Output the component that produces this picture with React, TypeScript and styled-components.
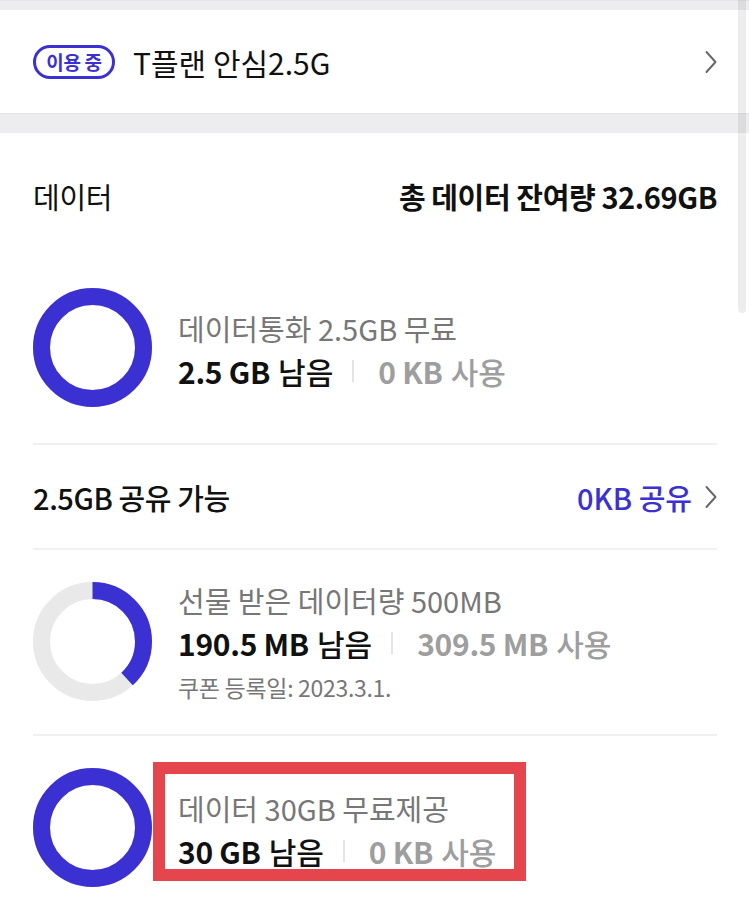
import React from 'react';
import styled, { createGlobalStyle } from 'styled-components';

const PURPLE = '#3b31d3';

const GlobalStyle = createGlobalStyle`
  html, body {
    margin: 0;
    padding: 0;
    background: #ffffff;
  }
  body {
    font-family: "Noto Sans CJK KR", "Noto Sans", sans-serif;
    color: #111111;
    overflow: hidden;
  }
`;

const Page = styled.div`
  position: relative;
  width: 749px;
  height: 911px;
  overflow: hidden;
  background: #ffffff;
`;

const GrayBand = styled.div<{ $height: number }>`
  box-sizing: border-box;
  height: ${({ $height }) => $height}px;
  background: #ededf0;
  border-top: 1px solid #e4e4e7;
`;

const PlanCard = styled.div`
  display: flex;
  align-items: center;
  height: 103px;
  padding: 0 32px 0 33px;
  background: #ffffff;
`;

const Badge = styled.span`
  display: inline-flex;
  align-items: center;
  justify-content: center;
  box-sizing: border-box;
  width: 82px;
  height: 34px;
  border: 3px solid ${PURPLE};
  border-radius: 17px;
  color: ${PURPLE};
  font-size: 19px;
  font-weight: 700;
  letter-spacing: -0.3px;
  padding-bottom: 1px;
`;

const PlanName = styled.span`
  flex: 1;
  margin-left: 18px;
  font-size: 30px;
  font-weight: 400;
`;

const Chevron = ({ color = '#666666' }: { color?: string }) => (
  <svg width="12" height="24" viewBox="0 0 12 24" fill="none">
    <path d="M1.5 2 L10.5 12 L1.5 22" stroke={color} strokeWidth="1.9" strokeLinecap="round" strokeLinejoin="round" />
  </svg>
);

const Section = styled.section`
  padding: 0 32px 0 33px;
`;

const SectionHeader = styled.div`
  display: flex;
  align-items: center;
  justify-content: space-between;
  height: 40px;
  padding: 43px 0 39px;
`;

const HeaderTitle = styled.span`
  font-size: 29px;
  font-weight: 400;
  letter-spacing: -0.3px;
`;

const HeaderTotal = styled.span`
  font-size: 29px;
  font-weight: 700;
  letter-spacing: -0.4px;
`;

const RingRow = styled.div<{ $divider?: boolean }>`
  display: flex;
  align-items: center;
  gap: 26px;
  height: 119px;
  padding: ${({ $divider }) => ($divider ? '32px 0 33px' : '33px 0 36px')};
  border-top: ${({ $divider }) => ($divider ? '2px solid #f0f0f0' : 'none')};
`;

const RingText = styled.div`
  display: flex;
  flex-direction: column;
  padding-top: 4px;
  white-space: nowrap;
`;

const Title = styled.div`
  font-size: 29px;
  line-height: 43px;
  color: #777777;
`;

const Stats = styled.div`
  display: flex;
  align-items: center;
  font-size: 30px;
  line-height: 43px;
`;

const Amount = styled.span<{ $muted?: boolean }>`
  color: ${({ $muted }) => ($muted ? '#9e9e9e' : '#111111')};
  font-weight: 700;
  letter-spacing: -0.3px;
`;

const AmountWord = styled.span<{ $muted?: boolean }>`
  color: ${({ $muted }) => ($muted ? '#9e9e9e' : '#111111')};
  font-weight: 500;
  margin-left: 8px;
`;

const StatDivider = styled.span`
  width: 2px;
  height: 22px;
  margin: 0 24px 0 19px;
  background: #e4e4e4;
`;

const Note = styled.div`
  font-size: 23px;
  line-height: 44px;
  color: #777777;
  letter-spacing: -0.3px;
`;

const ShareRow = styled.div`
  display: flex;
  align-items: center;
  justify-content: space-between;
  height: 103px;
  border-top: 2px solid #f0f0f0;
`;

const ShareLabel = styled.span`
  font-size: 29px;
  font-weight: 500;
  letter-spacing: -0.4px;
`;

const ShareLink = styled.span`
  display: flex;
  align-items: center;
  gap: 13px;
  color: ${PURPLE};
  font-size: 29px;
  font-weight: 500;
`;

const Highlight = styled.div`
  position: relative;

  &::after {
    content: '';
    position: absolute;
    top: -21px;
    left: -25px;
    right: -30px;
    bottom: -8px;
    border: 12px solid #e5464e;
    pointer-events: none;
  }
`;

const ScrollThumb = styled.div`
  position: absolute;
  top: 0;
  right: 3px;
  width: 8px;
  height: 313px;
  border-radius: 0 0 4px 4px;
  background: rgba(0, 0, 0, 0.07);
`;

const RingSvg = styled.svg`
  flex-shrink: 0;
`;

const Ring = ({ percent }: { percent: number }) => {
  const r = 51;
  const c = 2 * Math.PI * r;
  return (
    <RingSvg width="119" height="119" viewBox="0 0 119 119">
      <circle cx="59.5" cy="59.5" r={r} fill="none" stroke="#e9e9e9" strokeWidth="17" />
      <circle
        cx="59.5"
        cy="59.5"
        r={r}
        fill="none"
        stroke={PURPLE}
        strokeWidth="17"
        strokeDasharray={`${(c * percent) / 100} ${c}`}
        transform="rotate(-90 59.5 59.5)"
      />
    </RingSvg>
  );
};

interface UsageProps {
  left: string;
  used: string;
}

const Usage = ({ left, used }: UsageProps) => (
  <Stats>
    <Amount>{left}</Amount>
    <AmountWord>남음</AmountWord>
    <StatDivider />
    <Amount $muted>{used}</Amount>
    <AmountWord $muted>사용</AmountWord>
  </Stats>
);

export default function App() {
  return (
    <Page>
      <GlobalStyle />
      <GrayBand $height={10} />
      <PlanCard>
        <Badge>이용 중</Badge>
        <PlanName>T플랜 안심2.5G</PlanName>
        <Chevron />
      </PlanCard>
      <GrayBand $height={20} />

      <Section>
        <SectionHeader>
          <HeaderTitle>데이터</HeaderTitle>
          <HeaderTotal>총 데이터 잔여량 32.69GB</HeaderTotal>
        </SectionHeader>

        <RingRow>
          <Ring percent={100} />
          <RingText>
            <Title>데이터통화 2.5GB 무료</Title>
            <Usage left="2.5 GB" used="0 KB" />
          </RingText>
        </RingRow>

        <ShareRow>
          <ShareLabel>2.5GB 공유 가능</ShareLabel>
          <ShareLink>
            0KB 공유
            <Chevron />
          </ShareLink>
        </ShareRow>

        <RingRow $divider>
          <Ring percent={38.1} />
          <RingText>
            <Title>선물 받은 데이터량 500MB</Title>
            <Usage left="190.5 MB" used="309.5 MB" />
            <Note>쿠폰 등록일: 2023.3.1.</Note>
          </RingText>
        </RingRow>

        <RingRow $divider>
          <Ring percent={100} />
          <Highlight>
            <RingText>
              <Title>데이터 30GB 무료제공</Title>
              <Usage left="30 GB" used="0 KB" />
            </RingText>
          </Highlight>
        </RingRow>
      </Section>

      <ScrollThumb />
    </Page>
  );
}
